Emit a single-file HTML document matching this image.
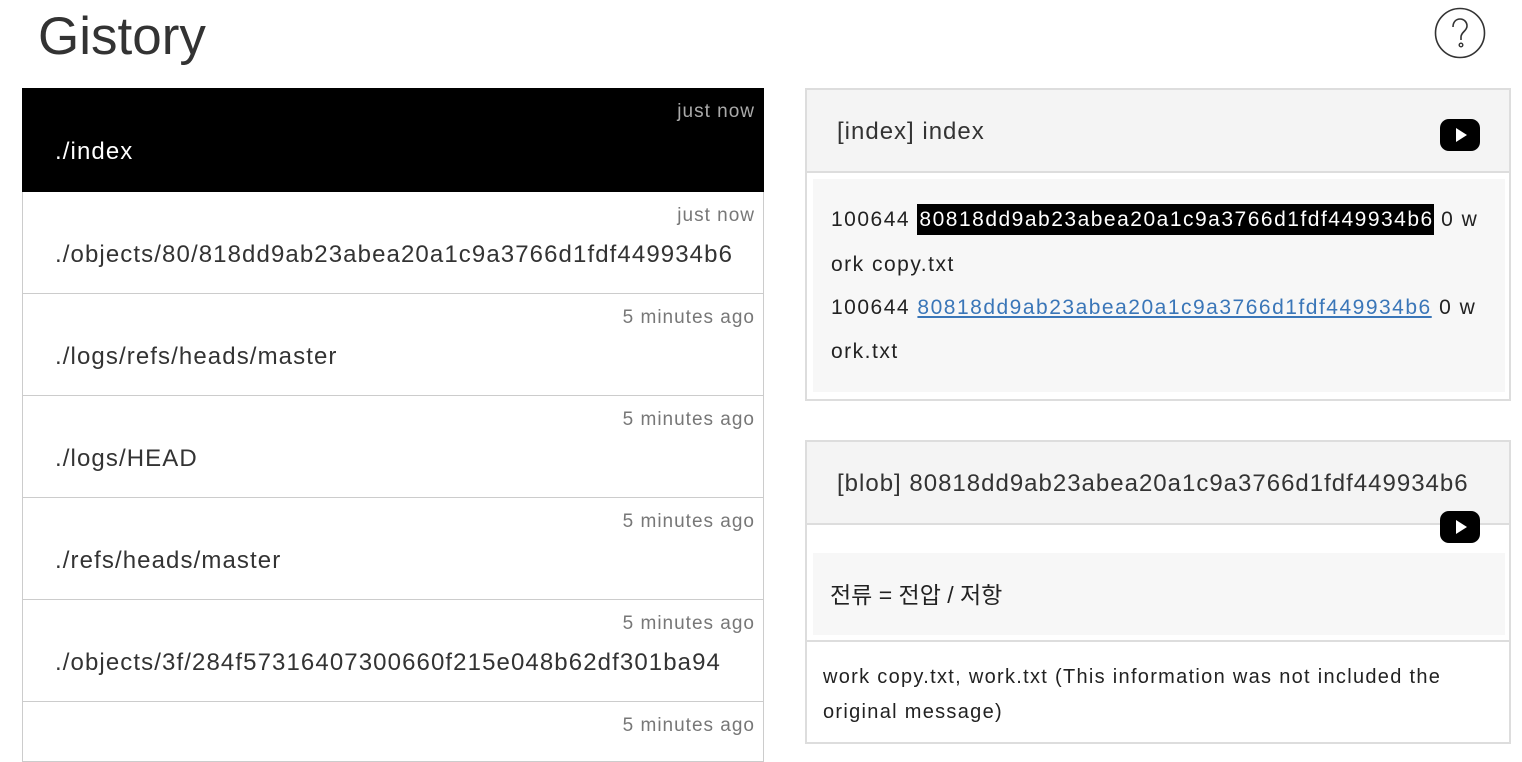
<!DOCTYPE html>
<html><head><meta charset="utf-8"><style>
*{margin:0;padding:0;box-sizing:border-box}
body{width:1522px;height:748px;overflow:hidden;background:#fff;font-family:"Liberation Sans","Noto Sans CJK KR",sans-serif;color:#333;position:relative}
.a{position:absolute;white-space:nowrap}
.item{position:absolute;left:22px;width:742px;height:102px;border:1px solid #ccc;border-top:none;background:#fff}
.item .t{position:absolute;right:8px;top:13px;font-size:19px;color:#777;letter-spacing:1px}
.item .p{position:absolute;left:32px;top:49px;font-size:24px;color:#333;letter-spacing:1.1px}
.panel{position:absolute;left:805px;width:706px;border:2px solid #ddd;background:#fff}
.hd{background:#f4f4f4;border-bottom:2px solid #ddd;position:relative}
.play{position:absolute;width:40px;height:32px;background:#000;border-radius:9px}
.play:after{content:"";position:absolute;left:16px;top:9px;border-left:11px solid #fff;border-top:7px solid transparent;border-bottom:7px solid transparent}
.txt{font-size:21px;letter-spacing:1.5px;color:#222}
.ft{font-size:20px;letter-spacing:1.3px;color:#222}
</style></head><body>
<div class="a" style="left:38px;top:6px;font-size:53px;font-weight:300;color:#333;letter-spacing:0">Gistory</div>
<svg class="a" style="left:1434px;top:7px" width="52" height="52" viewBox="0 0 52 52"><circle cx="26" cy="26" r="24.5" fill="none" stroke="#333" stroke-width="1.6"/><path d="M19 20c0-5 3-8 7-8s7 3 7 7c0 5-6 6-6 11v3" fill="none" stroke="#333" stroke-width="1.6"/><circle cx="27" cy="38" r="1.8" fill="none" stroke="#333" stroke-width="1.4"/></svg>

<div class="item" style="top:88px;background:#000;border-color:#000;height:104px"><div class="t" style="color:#aaa">just now</div><div class="p" style="color:#fff;top:50px">./index</div></div>
<div class="item" style="top:192px"><div class="t">just now</div><div class="p">./objects/80/818dd9ab23abea20a1c9a3766d1fdf449934b6</div></div>
<div class="item" style="top:294px"><div class="t">5 minutes ago</div><div class="p">./logs/refs/heads/master</div></div>
<div class="item" style="top:396px"><div class="t">5 minutes ago</div><div class="p">./logs/HEAD</div></div>
<div class="item" style="top:498px"><div class="t">5 minutes ago</div><div class="p">./refs/heads/master</div></div>
<div class="item" style="top:600px"><div class="t">5 minutes ago</div><div class="p">./objects/3f/284f57316407300660f215e048b62df301ba94</div></div>
<div class="item" style="top:702px;height:60px"><div class="t">5 minutes ago</div></div>

<div class="panel" style="top:88px;height:313px">
 <div class="hd" style="height:83px"><div class="a" style="left:30px;top:28px;font-size:24px;letter-spacing:1px">[index] index</div><div class="play" style="left:633px;top:29px"></div></div>
 <div style="position:absolute;left:6px;top:89px;width:692px;height:213px;background:#f7f7f7"></div>
 <div class="a txt" style="left:24px;top:118px">100644 <span style="background:#000;color:#fff;padding:4px 0 4px 2px">80818dd9ab23abea20a1c9a3766d1fdf449934b6</span> 0&nbsp;w</div>
 <div class="a txt" style="left:24px;top:163px">ork copy.txt</div>
 <div class="a txt" style="left:24px;top:206px">100644 <span style="color:#3a76b8;text-decoration:underline">80818dd9ab23abea20a1c9a3766d1fdf449934b6</span> 0&nbsp;w</div>
 <div class="a txt" style="left:24px;top:250px">ork.txt</div>
</div>

<div class="panel" style="top:440px;height:304px">
 <div class="hd" style="height:83px"><div class="a" style="left:30px;top:28px;font-size:24px;letter-spacing:1px">[blob] 80818dd9ab23abea20a1c9a3766d1fdf449934b6</div></div>
 <div class="play" style="left:633px;top:69px"></div>
 <div style="position:absolute;left:6px;top:111px;width:692px;height:82px;background:#f7f7f7"></div>
 <div class="a" style="left:23px;top:134px;font-size:23px;color:#222">전류 = 전압 / 저항</div>
 <div style="position:absolute;left:0;top:198px;width:702px;height:2px;background:#ddd"></div>
 <div class="a ft" style="left:16px;top:224px">work copy.txt, work.txt (This information was not included the</div>
 <div class="a ft" style="left:16px;top:259px">original message)</div>
</div>
</body></html>
